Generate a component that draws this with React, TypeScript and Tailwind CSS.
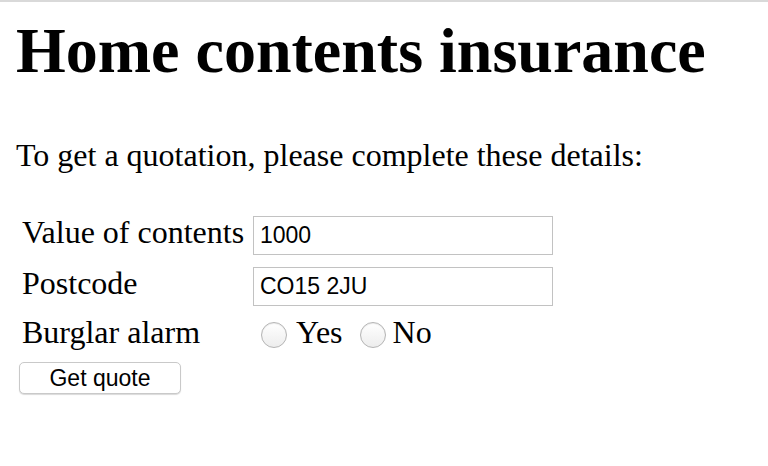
const inputCls =
  "h-[39px] w-[300px] border border-[#c2c2c2] px-[6px] font-['Liberation_Sans',sans-serif] text-[23px] outline-none";
const radioCls =
  "h-[26px] w-[26px] self-start mt-[6px] rounded-full border border-[#b4b4b4] bg-gradient-to-b from-white to-[#ededed] shadow-[inset_0_1px_1px_rgba(0,0,0,0.08)]";

export default function App() {
  return (
    <div className="min-h-[466px] bg-white font-['Liberation_Serif',serif] text-black">
      <div className="h-[2px] bg-[#d9d9d9]" />
      <div className="pl-4">
        <h1 className="mt-3 text-[64px] font-bold leading-[74px]">Home contents insurance</h1>
        <p className="mt-[49px] text-[32px] leading-[37px]">
          To get a quotation, please complete these details:
        </p>

        <form className="mt-[42px]" onSubmit={(e) => e.preventDefault()}>
          <div className="ml-[6px] flex flex-col">
            <div className="flex">
              <label className="w-[231px] text-[32px] leading-[33px]">Value of contents</label>
              <input defaultValue="1000" className={inputCls} />
            </div>
            <div className="mt-3 flex">
              <label className="w-[231px] text-[32px] leading-[33px]">Postcode</label>
              <input defaultValue="CO15 2JU" className={inputCls} />
            </div>
            <div className="mt-[10px] flex text-[32px] leading-[33px]">
              <span className="w-[231px]">Burglar alarm</span>
              <span className={`ml-2 ${radioCls}`} />
              <span className="ml-[9px]">Yes</span>
              <span className={`ml-[17px] ${radioCls}`} />
              <span className="ml-[7px]">No</span>
            </div>
          </div>

          <button
            type="submit"
            className="ml-[3px] mt-[13px] h-[32px] w-[162px] rounded-[5px] border border-[#c9c9c9] bg-white font-['Liberation_Sans',sans-serif] text-[23px] leading-none shadow-[0_1px_1px_rgba(0,0,0,0.15)]"
          >
            Get quote
          </button>
        </form>
      </div>
    </div>
  );
}
